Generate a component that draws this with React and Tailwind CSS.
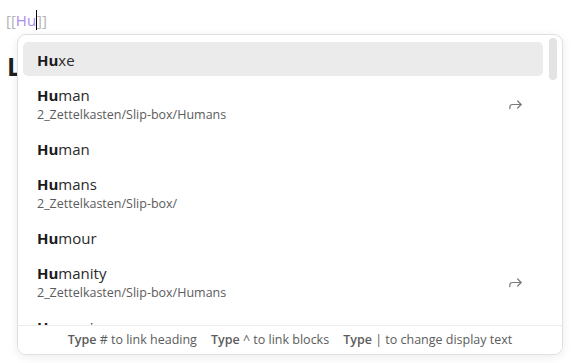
import React from "react";

const font = { fontFamily: '"Open Sans", "Noto Sans", sans-serif' };

const items = [
  { rest: "xe", active: true },
  { rest: "man", path: "2_Zettelkasten/Slip-box/Humans", alias: true },
  { rest: "man" },
  { rest: "mans", path: "2_Zettelkasten/Slip-box/" },
  { rest: "mour" },
  { rest: "manity", path: "2_Zettelkasten/Slip-box/Humans", alias: true },
  { rest: "manism" },
];

function ForwardIcon() {
  return (
    <svg width="17" height="17" viewBox="0 0 24 24" fill="none" stroke="currentColor" strokeWidth="1.7" strokeLinecap="round" strokeLinejoin="round">
      <path d="m15 17 5-5-5-5" />
      <path d="M4 18v-2a4 4 0 0 1 4-4h12" />
    </svg>
  );
}

function Suggestion({ item }) {
  return (
    <div
      className={`flex items-center rounded-[5px] pl-[14px] pr-[19px] ${
        item.path ? "h-[55px]" : "h-[34px]"
      } ${item.active ? "bg-[#ebebeb]" : ""}`}
    >
      <div className={`flex-1 min-w-0 ${item.path ? "" : "pt-[1px]"}`}>
        <div className="text-[15px] leading-[22px] text-[#2a2a2a]">
          <span className="font-bold text-[#1a1a1a]">Hu</span>
          {item.rest}
        </div>
        {item.path && (
          <div className="text-[12.5px] leading-[17px] text-[#5c5c5c]">{item.path}</div>
        )}
      </div>
      {item.alias && (
        <div className="text-[#7a7a7a] mt-[2px]">
          <ForwardIcon />
        </div>
      )}
    </div>
  );
}

export default function App() {
  return (
    <div className="relative w-[575px] h-[363px] bg-white overflow-hidden" style={font}>
      {/* editor behind the popup */}
      <div className="pl-[6px] pt-[9px]">
        <div className="text-[15px] leading-[22px] flex items-center">
          <span className="text-[#b3b3b3]">[[</span>
          <span className="text-[#a98cf0]">Hu</span>
          <span className="inline-block w-px h-[20px] bg-black" />
          <span className="text-[#b3b3b3]">]]</span>
        </div>
        <div className="mt-[20px] pl-[1px] text-[25px] leading-[30px] font-bold text-[#1e1e1e]">
          Learning
        </div>
      </div>

      {/* suggestion popup */}
      <div className="absolute left-[17px] top-[34px] w-[546px] h-[321px] bg-white border border-[#e0e0e0] rounded-[9px] shadow-[0_2px_10px_rgba(0,0,0,0.08)] flex flex-col overflow-hidden">
        <div className="flex flex-1 min-h-0">
          <div className="flex-1 min-w-0 overflow-hidden pl-[5px] pt-[7px]">
            {items.map((it, i) => (
              <Suggestion key={i} item={it} />
            ))}
          </div>
          <div className="w-[19px] pt-[3px] flex justify-center">
            <div className="w-[8px] h-[42px] rounded-full bg-[#e3e3e3] ml-[1px]" />
          </div>
        </div>
        <div className="h-[29px] shrink-0 border-t border-[#ececec] bg-white flex items-center justify-center gap-[14px] text-[12.5px] text-[#5c5c5c]">
          <span>
            <span className="font-semibold">Type</span> # to link heading
          </span>
          <span>
            <span className="font-semibold">Type</span> ^ to link blocks
          </span>
          <span>
            <span className="font-semibold">Type</span> | to change display text
          </span>
        </div>
      </div>
    </div>
  );
}
